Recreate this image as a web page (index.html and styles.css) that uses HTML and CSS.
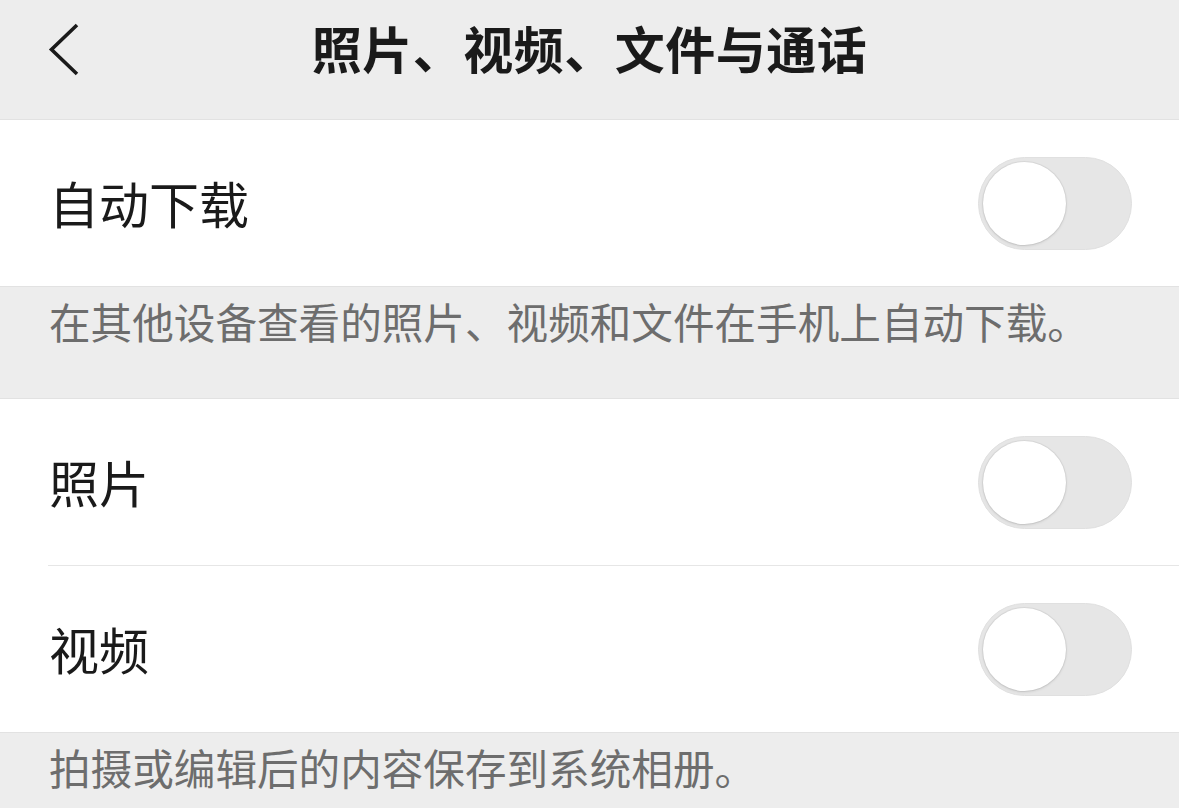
FILE: index.html
```html
<!DOCTYPE html>
<html lang="zh-CN">
<head>
<meta charset="utf-8">
<title>照片、视频、文件与通话</title>
<link rel="stylesheet" href="styles.css">
</head>
<body>
<div class="page">
  <header class="nav">
    <div class="back">
      <svg width="34" height="56" viewBox="0 0 34 56" aria-hidden="true">
        <path d="M30 3 L4.5 27.5 L30 52" fill="none" stroke="#1a1a1a" stroke-width="3.6" stroke-linecap="butt" stroke-linejoin="miter"/>
      </svg>
    </div>
    <h1 class="title">照片、视频、文件与通话</h1>
  </header>

  <section class="group">
    <div class="row">
      <span class="label">自动下载</span>
      <span class="switch"><span class="knob"></span></span>
    </div>
  </section>
  <p class="note note-mid">在其他设备查看的照片、视频和文件在手机上自动下载。</p>

  <section class="group">
    <div class="row">
      <span class="label">照片</span>
      <span class="switch"><span class="knob"></span></span>
    </div>
    <div class="row row-divided">
      <span class="label">视频</span>
      <span class="switch"><span class="knob"></span></span>
    </div>
  </section>
  <p class="note">拍摄或编辑后的内容保存到系统相册。</p>
</div>
</body>
</html>
```

FILE: styles.css
```css
html, body {
  margin: 0;
  padding: 0;
  background: #ededed;
}

body {
  font-family: "Noto Sans CJK SC", "Noto Sans", sans-serif;
  color: #1a1a1a;
}

.page {
  width: 1179px;
  height: 808px;
  overflow: hidden;
  background: #ededed;
}

.nav {
  position: relative;
  height: 119px;
  border-bottom: 1px solid #e2e2e2;
  display: flex;
  align-items: center;
  justify-content: center;
}

.back {
  position: absolute;
  left: 47px;
  top: 22px;
  width: 34px;
  height: 56px;
}

.back svg {
  display: block;
}

.title {
  margin: 0 0 26px 0;
  font-size: 50px;
  font-weight: 700;
  letter-spacing: 0.5px;
  line-height: 1;
  color: #1a1a1a;
}

.group {
  background: #ffffff;
  display: flex;
  flex-direction: column;
}

.row {
  height: 166px;
  display: flex;
  align-items: center;
  justify-content: space-between;
  padding: 0 47px 0 49px;
}

.row-divided {
  border-top: 1px solid #e6e6e6;
  margin-left: 48px;
  padding-left: 1px;
}

.label {
  font-size: 50px;
  line-height: 1;
  color: #1a1a1a;
  margin-top: -2px;
}

.switch {
  width: 154px;
  height: 93px;
  border-radius: 47px;
  background: #e6e6e6;
  box-sizing: border-box;
  border: 1px solid #e0e0e0;
  display: flex;
  align-items: center;
  padding-left: 4px;
}

.knob {
  width: 83px;
  height: 83px;
  border-radius: 50%;
  background: #ffffff;
  box-shadow: 0 1px 3px rgba(0, 0, 0, 0.12), 0 0 0 1px rgba(0, 0, 0, 0.05);
}

.note {
  margin: 0;
  padding: 8px 50px 0 49px;
  font-size: 41.6px;
  line-height: 52px;
  color: #6d6d6d;
  border-top: 1px solid #e2e2e2;
}

.note-mid {
  height: 113px;
  box-sizing: border-box;
  border-bottom: 1px solid #e2e2e2;
}
```
